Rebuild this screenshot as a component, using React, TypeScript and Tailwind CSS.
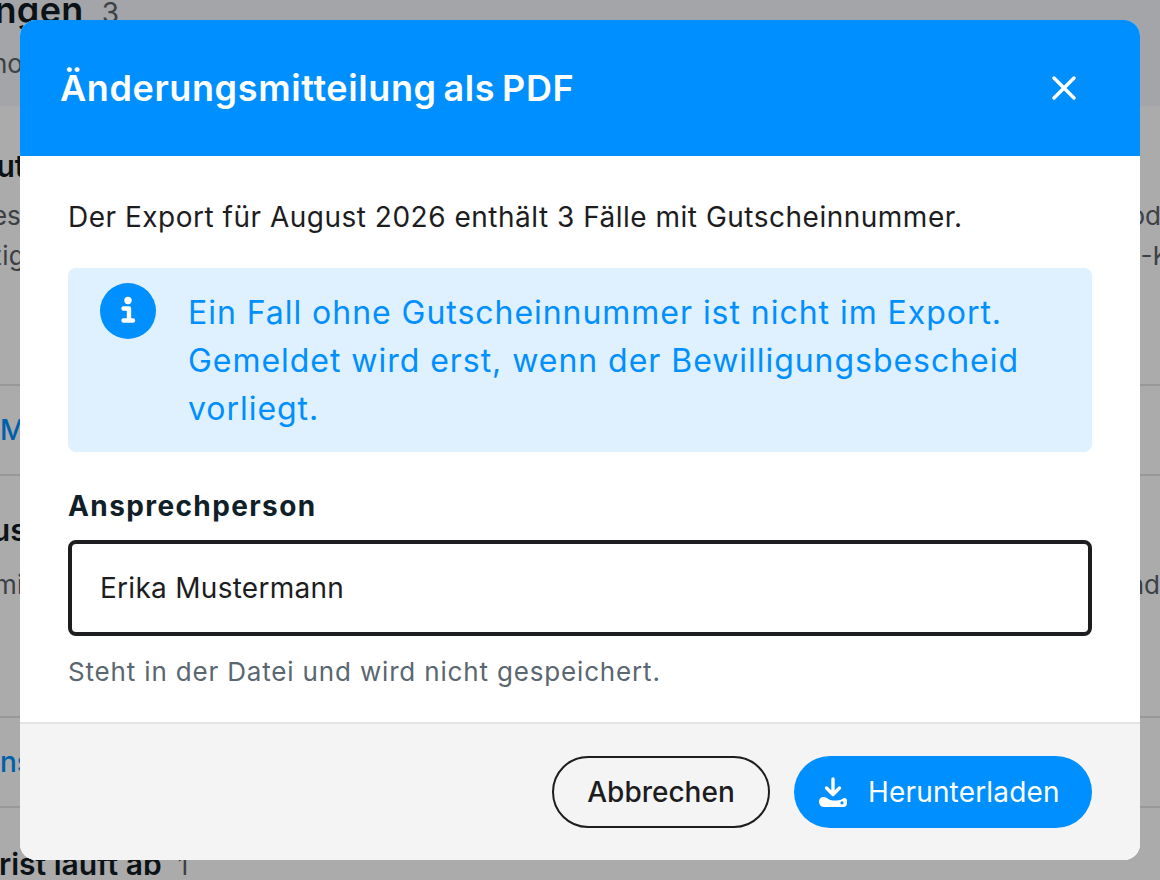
export default function App() {
  const Line = () => <div className="h-[2px] shrink-0 bg-[#e3e5e8]" />;
  return (
    <div className="relative h-[880px] w-[1160px] overflow-hidden bg-white font-['Inter',sans-serif] text-[#111c24]">
      {/* page behind the dialog */}
      <div className="flex h-[880px] flex-col overflow-hidden">
        <div className="h-[106px] shrink-0 overflow-hidden bg-[#f4f7fb]">
          <div className="mt-[-14px] flex items-baseline gap-[18px] text-[36px] font-semibold leading-[48px] tracking-[0.01em]">
            <span className="ml-[-136px] whitespace-nowrap">Änderungen</span>
            <span className="text-[28px] font-normal text-[#5a6168]">3</span>
          </div>
          <div className="ml-[-8px] mt-[9px] text-[26px] leading-[36px] text-[#5a6168]">ho</div>
        </div>
        <div className="h-[278px] shrink-0 pt-[40px]">
          <div className="ml-[-26px] text-[30px] font-semibold leading-[40px]">Gut</div>
          <div className="mt-[10px] flex justify-between text-[26px] leading-[40px] text-[#5a6168]">
            <span className="ml-[-24px]">des</span>
            <span className="mr-[-26px]">oder</span>
          </div>
          <div className="flex justify-between text-[26px] leading-[40px] text-[#5a6168]">
            <span className="ml-[-12px]">zig</span>
            <span className="mr-[-10px]">-K</span>
          </div>
        </div>
        <Line />
        <div className="flex h-[88px] shrink-0 items-center">
          <span className="text-[28px] font-medium text-[#008fff]">Mehr</span>
        </div>
        <Line />
        <div className="h-[240px] shrink-0 pt-[34px]">
          <div className="ml-[-30px] text-[30px] font-semibold leading-[40px]">Aus</div>
          <div className="mt-[15px] flex justify-between text-[26px] leading-[40px] text-[#5a6168]">
            <span className="ml-[-46px]">Termin</span>
            <span>und</span>
          </div>
        </div>
        <Line />
        <div className="flex h-[88px] shrink-0 items-center">
          <span className="ml-[-16px] text-[28px] font-medium text-[#008fff]">ans</span>
        </div>
        <Line />
        <div className="flex items-baseline gap-[16px] pt-[36px] text-[30px] font-semibold leading-[40px]">
          <span className="ml-[-18px] whitespace-nowrap">Frist läuft ab</span>
          <span className="text-[26px] font-normal text-[#5a6168]">1</span>
        </div>
      </div>

      {/* overlay */}
      <div className="absolute inset-0 flex items-center justify-center bg-[#000000]/[0.33]">
        <div className="flex h-[840px] w-[1120px] flex-col overflow-hidden rounded-2xl bg-white">
          <div className="flex h-[136px] shrink-0 items-center justify-between bg-[#008fff] pl-[40px] pr-[64px] text-white">
            <h2 className="text-[36px] font-semibold tracking-[0.017em] [word-spacing:-0.08em]">Änderungsmitteilung als PDF</h2>
            <svg viewBox="0 0 24 24" className="h-[24px] w-[24px]" fill="none" stroke="currentColor" strokeWidth="3.4" strokeLinecap="round">
              <path d="M2 2 22 22M22 2 2 22" />
            </svg>
          </div>
          <div className="flex flex-1 flex-col px-[48px] pt-[43px]">
            <p className="text-[28px] leading-[36px] tracking-[0.018em] text-[#1d1d1f]">
              Der Export für August 2026 enthält 3 Fälle mit Gutscheinnummer.
            </p>
            <div className="mt-[33px] flex h-[184px] items-start gap-[32px] rounded-lg bg-[#dff0ff] pl-[32px] pr-[32px] pt-[21px] text-[#008fff]">
              <svg viewBox="0 0 56 56" className="mt-[-6px] h-[56px] w-[56px] shrink-0">
                <circle cx="28" cy="28" r="28" fill="#008fff" />
                <circle cx="28" cy="17.5" r="3.7" fill="#fff" />
                <path d="M23.5 25.5H29V37M23.5 37.5H33" fill="none" stroke="#fff" strokeWidth="4.4" strokeLinecap="round" strokeLinejoin="round" />
              </svg>
              <p className="text-[32px] leading-[48px] tracking-[0.03em]">
                Ein Fall ohne Gutscheinnummer ist nicht im Export. Gemeldet wird erst, wenn der Bewilligungsbescheid vorliegt.
              </p>
            </div>
            <label className="mt-[36px] text-[28px] font-bold leading-[36px] tracking-[0.05em] text-[#0f2029]">Ansprechperson</label>
            <div className="mt-[16px] flex h-[96px] items-center rounded-lg border-4 border-[#1d1d1f] pl-[28px] text-[28px] tracking-[0.01em] text-[#1d1d1f]">
              Erika Mustermann
            </div>
            <p className="mt-[18px] text-[26px] leading-[36px] tracking-[0.032em] text-[#5a6670]">
              Steht in der Datei und wird nicht gespeichert.
            </p>
          </div>
          <div className="flex h-[138px] shrink-0 items-center justify-end gap-[24px] border-t-2 border-[#e3e3e3] bg-[#f4f4f4] pr-[48px]">
            <button className="flex h-[72px] w-[218px] items-center justify-center rounded-full border-2 border-[#1d1d1f] text-[28px] font-medium text-[#1d1d1f]">
              Abbrechen
            </button>
            <button className="flex h-[72px] w-[298px] items-center gap-[21px] rounded-full bg-[#008fff] pl-[25px] text-[28px] font-normal tracking-[0.006em] text-white">
              <svg viewBox="0 0 28 30" className="h-[30px] w-[28px]">
                <path d="M14 2V17M7.5 11 14 17.5 20.5 11" fill="none" stroke="#fff" strokeWidth="3.4" strokeLinecap="round" strokeLinejoin="round" />
                <path fillRule="evenodd" fill="#fff" d="M4.5 20C1.8 20 0 22 0 24.5S1.8 30 4.5 30H24.5C26.5 30 28 28.5 28 26V23.5C28 21.5 26 20.5 24.5 21.2 22 22.5 20.5 23.5 18 23.5H14C10 23.5 8 20 4.5 20ZM23 24.2A1.6 1.6 0 1 0 23 27.4 1.6 1.6 0 1 0 23 24.2Z" />
              </svg>
              Herunterladen
            </button>
          </div>
        </div>
      </div>
    </div>
  );
}
